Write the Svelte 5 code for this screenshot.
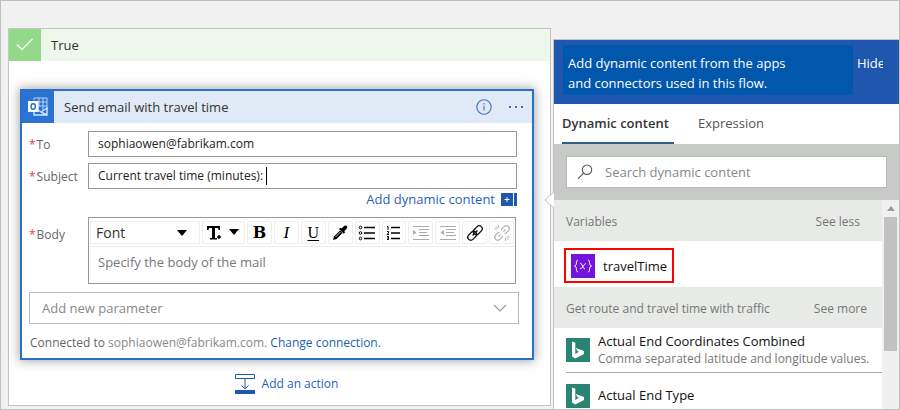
<script>
  let to = $state('sophiaowen@fabrikam.com');
  let subject = $state('Current travel time (minutes): ');
  let body = $state('');
  let query = $state('');
  let tab = $state('dynamic');

  const tokens = [
    { title: 'Actual End Coordinates Combined', text: 'Comma separated latitude and longitude values.' },
    { title: 'Actual End Type', text: '' }
  ];
</script>

<div class="page">
  <section class="branch">
    <header class="branch-head">
      <span class="tick">
        <svg width="18" height="14" viewBox="0 0 18 14"><path d="M1 6.5 6 11.5 16.5 1" /></svg>
      </span>
      <span class="branch-title">True</span>
    </header>

    <div class="action">
      <header class="action-head">
        <span class="outlook">
          <svg width="22" height="20" viewBox="0 0 22 20">
            <path d="M7 3V1h13v12M12 1v9M16 1v12M7 5h13M11 9h9" fill="none" stroke="#b9d4f6" />
            <path d="M7 15v3h13v-7l-6 4-3-2M14 15l6 3" fill="none" stroke="#cfe2fa" stroke-width="1.400" />
            <rect x="1" y="4" width="10.500" height="11" fill="#fff" />
            <ellipse cx="6.200" cy="9.500" rx="2.200" ry="2.700" fill="none" stroke="#2a73d2" stroke-width="1.500" />
          </svg>
        </span>
        <span class="action-title">Send email with travel time</span>
        <button class="plain" aria-label="Information">
          <svg width="16" height="16" viewBox="0 0 16 16">
            <circle cx="8" cy="8" r="7.200" fill="none" stroke="#3f70c2" stroke-width="1.100" />
            <path d="M8 6.700v4.800M8 4v1.400" stroke="#3f70c2" stroke-width="1.100" />
          </svg>
        </button>
        <button class="plain" aria-label="More commands">
          <svg width="16" height="16" viewBox="0 0 16 16" fill="#3f70c2">
            <rect x="1" y="7" width="2" height="2" /><rect x="7" y="7" width="2" height="2" /><rect x="13" y="7" width="2" height="2" />
          </svg>
        </button>
      </header>

      <div class="form">
        <div class="row">
          <label for="to"><i>*</i>To</label>
          <div class="box"><input id="to" type="text" bind:value={to} /></div>
        </div>
        <div class="row">
          <label for="subject"><i>*</i>Subject</label>
          <div class="box"><input id="subject" type="text" bind:value={subject} /><span class="caret"></span></div>
        </div>
        <div class="add-dynamic">
          <a href="#dynamic">Add dynamic content</a>
          <svg width="16" height="13" viewBox="0 0 16 13">
            <path d="M0 0h12v13H0zM13 0h3v13h-3z" fill="#1f57ae" />
            <path d="M3.500 6.500h5M6 4v5" stroke="#fff" />
          </svg>
        </div>
        <div class="row body-row">
          <label for="mail-body"><i>*</i>Body</label>
          <div class="editor">
            <div class="toolbar">
              <div class="pick font-pick">
                <select aria-label="Font"><option>Font</option></select>
                <svg width="10" height="6" viewBox="0 0 10 6"><path d="M0 0h10L5 6z" /></svg>
              </div>
              <button class="size" aria-label="Font size">
                <svg width="34" height="18" viewBox="0 0 34 18">
                  <path d="M0 2h13v4h-1.500L11 4H8v10h2v1.500H3V14h2V4H2l-.5 2H0z" />
                  <path d="M12 11v4M10 13h4" stroke="#000" stroke-width="1.500" />
                  <path d="M22 5h10l-5 6z" />
                </svg>
              </button>
              <button class="bold" aria-label="Bold">B</button>
              <button class="italic" aria-label="Italic">I</button>
              <button class="under" aria-label="Underline">U</button>
              <button aria-label="Text colour">
                <svg width="18" height="18" viewBox="0 0 18 18">
                  <path d="M2 16 3 12.500 9 6.500 11.500 9 5.500 15z" />
                  <path d="m8 5 1.500-1.300 1 .8L13 2c2-1.600 4.300.6 2.800 2.600L13.300 7.200l.8 1L12.700 9.700z" />
                  <path d="m4.500 13 5-5" stroke="#fff" stroke-width=".8" />
                </svg>
              </button>
              <button aria-label="Bulleted list">
                <svg width="18" height="16" viewBox="0 0 18 16" fill="none" stroke="#000">
                  <circle cx="2.500" cy="2.500" r="1.300" /><circle cx="2.500" cy="8" r="1.300" /><circle cx="2.500" cy="13.500" r="1.300" />
                  <path d="M6 2.500h11M6 8h11M6 13.500h11" stroke-width="1.300" />
                </svg>
              </button>
              <button aria-label="Numbered list">
                <svg width="16" height="16" viewBox="0 0 16 16" fill="none" stroke="#000">
                  <path d="M1 1.500h1V5M1 6.500h1.500V8L1 9.500h2M1 11.500h1.500v3H1M1 13h1.500" />
                  <path d="M5 2.500h9M5 8h9M5 13.500h9" stroke-width="1.700" />
                </svg>
              </button>
              <button aria-label="Indent">
                <svg width="18" height="16" viewBox="0 0 18 16" stroke="#aaa" fill="#aaa">
                  <path d="M1 1.500h16M7 4.500h10M7 7.500h8M7 10.500h10M1 14.500h16" /><path d="M1 5v5l3.500-2.500z" stroke="none" />
                </svg>
              </button>
              <button aria-label="Outdent">
                <svg width="18" height="16" viewBox="0 0 18 16" stroke="#aaa" fill="#aaa">
                  <path d="M1 1.500h16M7 4.500h10M7 7.500h8M7 10.500h10M1 14.500h16" /><path d="M5 5v5L1.500 7.500z" stroke="none" />
                </svg>
              </button>
              <button aria-label="Link">
                <svg width="18" height="18" viewBox="0 0 18 18" fill="none" stroke="#111" stroke-width="1.300">
                  <g transform="rotate(-45 9 9)"><rect x="0" y="6" width="10" height="6" rx="3" /><rect x="8" y="6" width="10" height="6" rx="3" /><path d="M5.500 9h7" /></g>
                </svg>
              </button>
              <button aria-label="Remove link">
                <svg width="18" height="18" viewBox="0 0 18 18" fill="none" stroke="#b4b4b4" stroke-width="1.300">
                  <g transform="rotate(-45 9 9)"><path d="M7.500 11.500 6.500 12H3a3 3 0 0 1 0-6h3.500l1 .8M10.500 6.500l1-.5H15a3 3 0 0 1 0 6h-3.500l-1-.8M4 9h3M11 9h3" /></g>
                  <path d="M5.500 1v3M1.500 5h3M2.500 2l2 2M12.500 14v3M13.500 13h3M13.500 14l2 2" stroke-width="1" />
                </svg>
              </button>
            </div>
            <textarea id="mail-body" rows="1" placeholder="Specify the body of the mail" bind:value={body}></textarea>
          </div>
        </div>
        <div class="pick param-pick">
          <select aria-label="Add new parameter"><option>Add new parameter</option></select>
          <svg width="14" height="9" viewBox="0 0 14 9"><path d="m1 1 6 6 6-6" fill="none" stroke="#999" stroke-width="1.200" /></svg>
        </div>
        <p class="connected">Connected to <span>sophiaowen@fabrikam.com.</span> <a href="#connection">Change connection.</a></p>
      </div>
    </div>

    <button class="add-action">
      <svg width="20" height="20" viewBox="0 0 20 20" fill="none" stroke="#1f57ae">
        <path d="M.5.500h19v4H.5zM10 5v10M6.500 11.500 10 15l3.500-3.500" /><path d="M0 16h20v4H0z" fill="#1f57ae" stroke="none" />
      </svg>
      Add an action
    </button>
  </section>

  <aside class="panel" id="dynamic">
    <svg class="pointer" width="10" height="18" viewBox="0 0 10 18"><path d="M10 1 1 9l9 8" fill="#fff" stroke="#c4c4c4" /></svg>
    <header class="panel-head">
      <p>Add dynamic content from the apps<br />and connectors used in this flow.</p>
      <button>Hide</button>
    </header>
    <nav class="tabs">
      <button class:active={tab === 'dynamic'} onclick={() => (tab = 'dynamic')}>Dynamic content</button>
      <button class:active={tab === 'expression'} onclick={() => (tab = 'expression')}>Expression</button>
    </nav>
    <div class="search">
      <label>
        <svg width="16" height="16" viewBox="0 0 16 16" fill="none" stroke="#555" stroke-width="1.100"><circle cx="10" cy="5.700" r="4.700" /><path d="M6.600 9.200 1 14.800" /></svg>
        <input type="text" aria-label="Search dynamic content" placeholder="Search dynamic content" bind:value={query} />
      </label>
    </div>
    <div class="results">
      <div class="list">
        <div class="group"><span>Variables</span><a class="less" href="#less">See less</a></div>
        <div class="variable">
          <button>
            <svg width="24" height="24" viewBox="0 0 24 24" fill="none" stroke="#fff">
              <rect width="24" height="24" fill="#7413dc" stroke="none" />
              <path d="M7 6C4.500 6 6.500 11.500 3.500 12c3 .5 1 6 3.500 6M17 6c2.500 0 .5 5.500 3.500 6-3 .5-1 6-3.500 6" />
              <path d="M9 9.500c2.500-1 2.500 6 5 5.200M15 9.500c-2 0-3.500 5.500-6 5.200" />
            </svg>
            travelTime
          </button>
        </div>
        <div class="group"><span>Get route and travel time with traffic</span><a href="#more">See more</a></div>
        {#each tokens as token}
          <button class="token">
            <svg width="24" height="24" viewBox="0 0 24 24">
              <rect width="24" height="24" fill="#2a8474" />
              <path d="m6 3.500 3.300 1.200v11.200l3.700-2.100-1.800-.9-1.300-3 8.100 3v3L9.300 20.500 6 18.600z" fill="#fff" />
            </svg>
            <span><b>{token.title}</b>{#if token.text}<small>{token.text}</small>{/if}</span>
          </button>
        {/each}
      </div>
      <div class="scroll">
        <svg width="8" height="5" viewBox="0 0 8 5"><path d="M0 5 4 0l4 5z" fill="#999" /></svg>
        <div class="thumb"></div>
      </div>
    </div>
  </aside>
</div>

<style>
  :global(body) { margin: 0; }
  .page, .page :global(*) { box-sizing: border-box; }
  .page {
    display: grid;
    grid-template-columns: minmax(0, 1fr) 346px;
    gap: 2px;
    align-items: start;
    min-height: 100vh;
    padding-left: 7px;
    border: 1px solid #bfbfbf;
    background: #f1f1f1;
    font: 13px/18px "Open Sans", "Noto Sans", sans-serif;
    color: #333;
  }
  svg { display: block; flex: none; }
  button, input, select, textarea { font: inherit; color: inherit; margin: 0; }
  button { padding: 0; border: 0; background: none; cursor: pointer; }
  input, select, textarea { border: 0; outline: 0; background: none; padding: 0; }
  a { text-decoration: none; color: #2a5fb8; }
  p { margin: 0; }

  .branch { margin-top: 27px; border: 1px solid #c4c4c4; background: #fff; }
  .branch-head { display: flex; align-items: center; background: #edf7ec; }
  .tick { display: grid; place-items: center; width: 32px; height: 32px; background: #92d98a; }
  .tick path { fill: none; stroke: #fff; stroke-width: 1.3; }
  .branch-title { padding-left: 10px; }

  .action {
    margin: 28px 16px 0 11px;
    border: 2px solid #2a6fc9;
    background: #fff;
    box-shadow: 0 0 10px 1px rgba(0, 0, 0, 0.35);
  }
  .action-head { display: flex; align-items: center; gap: 16px; padding-right: 8px; background: #dfeaf6; }
  .outlook { display: grid; place-items: center; width: 32px; height: 32px; background: #2a73d2; }
  .action-title { flex: 1; margin-left: -6px; }

  .form { padding: 8px 13px 6px 7px; }
  .row { display: flex; align-items: center; margin: 0 2px 6px 0; }
  .row label { flex: 0 0 59px; padding-top: 2px; color: #666; font-size: 12px; white-space: nowrap; }
  .row label i { margin-right: 1px; color: #e0414f; font-style: normal; }
  .box { display: flex; align-items: center; flex: 1; min-width: 0; height: 26px; padding: 0 9px; border: 1px solid #999; font-size: 12px; color: #222; }
  .box input { field-sizing: content; }
  .caret { width: 1px; height: 18px; background: #000; }
  .add-dynamic { display: flex; justify-content: flex-end; align-items: center; gap: 6px; margin: -5px 2px 9px 0; }

  .body-row { align-items: flex-start; margin-bottom: 8px; }
  .body-row label { padding-top: 9px; }
  .editor { flex: 1; min-width: 0; border: 1px solid #999; margin-right: 1px; }
  .toolbar { display: flex; gap: 2px; padding: 3px 1px 2px; border-bottom: 1px solid #eee; }
  .toolbar button { display: grid; place-items: center; flex: 1 1 25px; min-width: 0; height: 23px; border: 1px solid #eee; border-radius: 2px; color: #000; font-family: "Liberation Serif", serif; font-size: 17px; line-height: 20px; }
  .toolbar .size { flex: 0 0 43px; }
  .toolbar .bold { font-family: "DejaVu Serif", serif; font-weight: 700; font-size: 16px; }
  .toolbar .italic { font-style: italic; }
  .toolbar .under { text-decoration: underline; text-underline-offset: 2px; font-size: 16px; }
  .pick { display: flex; align-items: center; }
  .pick select { flex: 1; min-width: 0; appearance: none; }
  .font-pick { flex: 0 0 110px; padding: 0 12px 0 5px; border: 1px solid #eee; font-size: 14px; }
  textarea { display: block; width: 100%; height: 36px; padding: 6px 9px; resize: none; line-height: 18px; }
  textarea::placeholder { color: #777; }

  .param-pick { height: 32px; padding: 0 11px 0 12px; border: 1px solid #bbb; color: #888; }
  .connected { padding: 10px 1px 0; font-size: 12px; color: #666; }
  .connected span { color: #888; }
  .connected a { color: #1a5fae; }
  .add-action { display: flex; align-items: center; gap: 7px; margin: 14px auto 11px; padding-left: 14px; font-size: 12px; color: #2a5fb8; }

  .panel { position: relative; min-width: 0; margin-top: 38px; border: solid #c4c4c4; border-width: 1px 0 0 1px; background: #fff; }
  .pointer { position: absolute; left: -10px; top: 151px; }
  .panel-head { display: flex; align-items: flex-start; padding: 5px 16px 9px 9px; background: #1f57ae; color: #fff; }
  .panel-head p { flex: 1; padding: 8px 5px 2px; background: #0057ab; line-height: 20px; }
  .panel-head button { width: 30px; height: 20px; margin-top: 8px; padding-left: 4px; overflow: hidden; text-align: left; }
  .tabs { display: flex; gap: 24px; padding-left: 8px; }
  .tabs button { height: 40px; border-bottom: 2px solid transparent; color: #555; }
  .tabs .active { min-width: 112px; border-color: #2a5f8f; color: #333; font-weight: 600; text-align: left; }
  .search { padding: 12px; background: #c8cac8; }
  .search label { display: flex; align-items: center; gap: 12px; height: 32px; padding: 0 10px; border: 1px solid #bbb; background: #fff; }
  .search input { flex: 1; min-width: 0; }
  .search input::placeholder { color: #888; }
  .results { display: flex; }
  .list { flex: 1; min-width: 0; }
  .group { display: flex; align-items: center; justify-content: space-between; height: 41px; padding: 2px 15px 0 12px; background: #e8eae7; color: #777; font-size: 12px; }
  .group a { color: #777; }
  .group .less { padding-right: 7px; }
  .variable { padding: 7px 10px 4px; }
  .variable button { display: flex; align-items: center; gap: 8px; height: 35px; padding: 0 5px; border: 2px solid #f00; color: #111; }
  .token { display: flex; align-items: center; width: calc(100% - 12px); min-height: 45px; margin-left: 12px; gap: 8px; text-align: left; white-space: nowrap; border-bottom: 1px solid #aaa; }
  .token:last-child { min-height: 36px; border: 0; padding-top: 9px; }
  .token b, .token small { display: block; font-weight: 500; font-size: 13px; line-height: 17px; color: #111; }
  .token small { font-size: 12px; font-weight: 400; color: #777; }
  .scroll { display: flex; flex-direction: column; align-items: center; gap: 6px; width: 17px; padding-top: 6px; background: #f0f0f0; }
  .thumb { width: 13px; height: 134px; background: #c1c1c1; }
</style>
